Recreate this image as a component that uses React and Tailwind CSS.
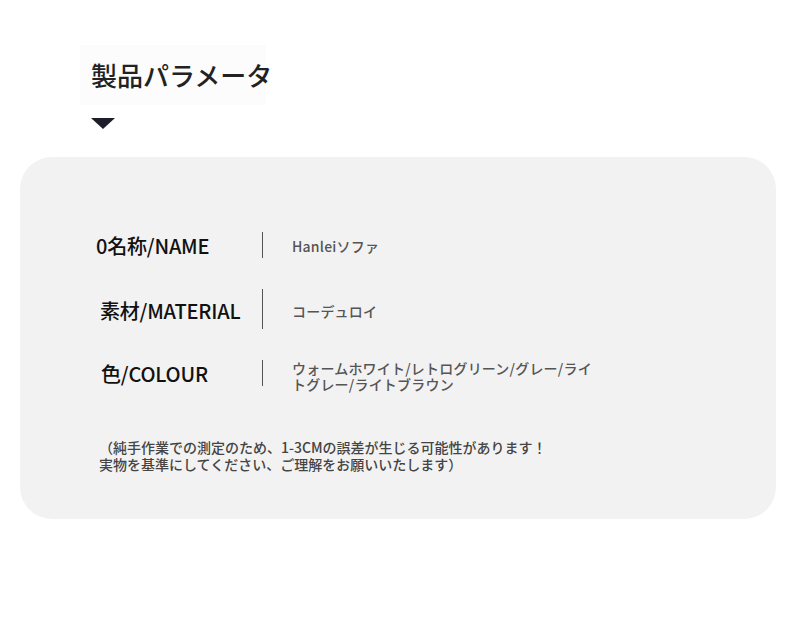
import React from 'react';

const rows = [
  { label: '0名称/NAME', value: 'Hanleiソファ', labelPad: 'pl-[76px] pt-[3px]', valuePad: 'pt-[2px]', rowH: 'h-[26px]' },
  { label: '素材/MATERIAL', value: 'コーデュロイ', labelPad: 'pl-[80px] pt-[6px]', valuePad: 'pt-[3px]', rowH: 'h-[40px]' },
  {
    label: '色/COLOUR',
    value: 'ウォームホワイト/レトログリーン/グレー/ライトグレー/ライトブラウン',
    labelPad: 'pl-[81px] pt-[4px]',
    valuePad: 'pt-[5px]',
    rowH: 'h-[26px]',
  },
];

function App() {
  return (
    <div className="w-[790px] h-[620px] bg-white font-['Noto_Sans_CJK_JP','Noto_Sans',sans-serif] overflow-hidden">
      <div className="pt-[45px] pl-[80px]">
        <div className="w-[186px] h-[60px] bg-[#fcfcfc] flex items-center pl-[11px]">
          <h1 className="text-[26px] leading-none text-[#222] font-medium whitespace-nowrap">製品パラメータ</h1>
        </div>
        <div className="mt-[13px] ml-[11px] w-0 h-0 border-l-[12px] border-r-[12px] border-t-[11px] border-l-transparent border-r-transparent border-t-[#1e1e2a]" />
      </div>

      <div className="mt-[28px] mx-[20px] w-[756px] h-[362px] rounded-[32px] bg-[#f2f2f2] pt-[75px]">
        <div className="flex flex-col gap-[31px]">
          {rows.map((row, i) => (
            <div key={i} className={`flex items-center ${row.rowH}`}>
              <div className={`w-[242px] ${row.labelPad}`}>
                <span className="text-[20px] leading-none text-[#111] font-medium tracking-[-0.2px] whitespace-nowrap">{row.label}</span>
              </div>
              <div className="w-px h-full bg-[#555]" />
              <div className={`pl-[29px] w-[331px] text-[14px] leading-[16px] text-[#555] font-medium tracking-[0.2px] ${row.valuePad}`}>
                {row.value}
              </div>
            </div>
          ))}
        </div>
        <p className="mt-[53px] pl-[79px] text-[14px] leading-[17px] text-[#444] font-medium whitespace-nowrap">
          （純手作業での測定のため、1-3CMの誤差が生じる可能性があります！
          <br />
          実物を基準にしてください、ご理解をお願いいたします）
        </p>
      </div>
    </div>
  );
}

export default App;
